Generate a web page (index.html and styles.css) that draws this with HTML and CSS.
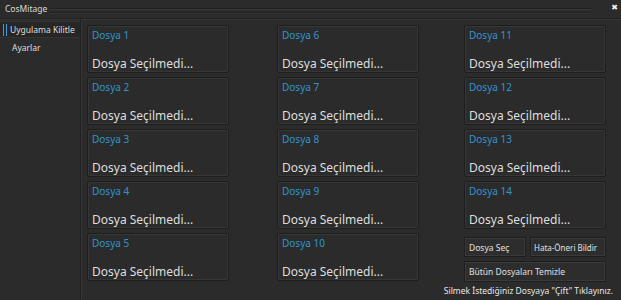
FILE: index.html
```html
<!DOCTYPE html>
<html lang="tr">
<head>
    <meta charset="UTF-8">
    <title>CosMitage</title>
    <link rel="stylesheet" href="styles.css">
</head>
<body>
    <div class="window">
        <div class="titlebar">
            <span class="title">CosMitage</span>
            <span class="title-line"></span>
            <span class="close">&#10006;</span>
        </div>
        <div class="main">
            <div class="sidebar">
                <div class="nav-item active"><span class="bars"></span>Uygulama Kilitle</div>
                <div class="nav-item">Ayarlar</div>
            </div>
            <div class="content">
                <div class="grid">
                    <div class="col">
                        <div class="slot"><div class="slot-title">Dosya 1</div><div class="slot-file">Dosya Seçilmedi...</div></div>
                        <div class="slot"><div class="slot-title">Dosya 2</div><div class="slot-file">Dosya Seçilmedi...</div></div>
                        <div class="slot"><div class="slot-title">Dosya 3</div><div class="slot-file">Dosya Seçilmedi...</div></div>
                        <div class="slot"><div class="slot-title">Dosya 4</div><div class="slot-file">Dosya Seçilmedi...</div></div>
                        <div class="slot"><div class="slot-title">Dosya 5</div><div class="slot-file">Dosya Seçilmedi...</div></div>
                    </div>
                    <div class="col">
                        <div class="slot"><div class="slot-title">Dosya 6</div><div class="slot-file">Dosya Seçilmedi...</div></div>
                        <div class="slot"><div class="slot-title">Dosya 7</div><div class="slot-file">Dosya Seçilmedi...</div></div>
                        <div class="slot"><div class="slot-title">Dosya 8</div><div class="slot-file">Dosya Seçilmedi...</div></div>
                        <div class="slot"><div class="slot-title">Dosya 9</div><div class="slot-file">Dosya Seçilmedi...</div></div>
                        <div class="slot"><div class="slot-title">Dosya 10</div><div class="slot-file">Dosya Seçilmedi...</div></div>
                    </div>
                    <div class="col">
                        <div class="slot"><div class="slot-title">Dosya 11</div><div class="slot-file">Dosya Seçilmedi...</div></div>
                        <div class="slot"><div class="slot-title">Dosya 12</div><div class="slot-file">Dosya Seçilmedi...</div></div>
                        <div class="slot"><div class="slot-title">Dosya 13</div><div class="slot-file">Dosya Seçilmedi...</div></div>
                        <div class="slot"><div class="slot-title">Dosya 14</div><div class="slot-file">Dosya Seçilmedi...</div></div>
                        <div class="actions">
                            <div class="btn-row">
                                <button class="btn btn-pick">Dosya Seç</button>
                                <button class="btn btn-report">Hata-Öneri Bildir</button>
                            </div>
                            <button class="btn btn-clear">Bütün Dosyaları Temizle</button>
                        </div>
                    </div>
                </div>
                <div class="hint">Silmek İstediğiniz Dosyaya "Çift" Tıklayınız.</div>
            </div>
        </div>
    </div>
</body>
</html>
```

FILE: styles.css
```css
body {
    margin: 0;
    background: #2b2b2b;
    font-family: "Noto Sans", "DejaVu Sans", sans-serif;
    color: #dcdcdc;
}

.window {
    width: 621px;
    height: 300px;
    display: flex;
    flex-direction: column;
    overflow: hidden;
}

.titlebar {
    flex-shrink: 0;
    height: 18px;
    display: flex;
    align-items: flex-start;
    padding: 0 4px 0 5px;
    border-bottom: 1px solid #222;
    box-shadow: 0 1px 0 #353535;
}

.title {
    font-size: 8.5px;
    line-height: 17px;
    color: #d8d8d8;
}

.title-line {
    flex: 1;
    height: 1px;
    margin: 8px 20px 0 3px;
    background: #1f1f1f;
    box-shadow: 0 1px 0 #3a3a3a, 0 4px 0 #232323, 0 5px 0 #343434;
}

.close {
    font-size: 8px;
    line-height: 14px;
    color: #f2f2f2;
    margin-right: -1px;
}

.main {
    flex: 1;
    display: flex;
}

.sidebar {
    width: 80px;
    flex-shrink: 0;
    padding-top: 2px;
    border-right: 1px solid #202020;
    box-shadow: 1px 0 0 #363636;
}

.nav-item {
    display: flex;
    align-items: center;
    height: 15px;
    padding-left: 12px;
    font-size: 8.5px;
    color: #dedede;
    white-space: nowrap;
}

.nav-item.active {
    padding-left: 3px;
    background: #262626;
    border-top: 1px solid #333;
    border-bottom: 1px solid #333;
}

.bars {
    width: 1px;
    height: 12px;
    margin-right: 6px;
    background: #3d9be0;
    box-shadow: 3px 0 0 #3d9be0;
}

.nav-item + .nav-item {
    margin-top: 2px;
}

.content {
    flex: 1;
    padding: 6px 0 0 6px;
    display: flex;
    flex-direction: column;
}

.grid {
    display: grid;
    grid-template-columns: 190px 187px 142px;
}

.col {
    display: flex;
    flex-direction: column;
    gap: 4px;
}

.slot {
    width: 142px;
    height: 48px;
    box-sizing: border-box;
    border: 1px solid #1e1e1e;
    box-shadow: inset 0 0 0 1px #363636;
    border-radius: 2px;
    display: flex;
    flex-direction: column;
    justify-content: space-between;
    padding: 0 0 0 4px;
}

.slot-title {
    font-size: 10px;
    line-height: 12px;
    color: #3193cf;
    margin-top: 3px;
}

.slot-file {
    font-size: 12px;
    line-height: 16px;
    color: #dedede;
}

.actions {
    display: flex;
    flex-direction: column;
    gap: 4px;
    padding-top: 4px;
}

.btn-row {
    display: flex;
    justify-content: space-between;
}

.btn {
    height: 20px;
    background: #2d2d2d;
    border: 1px solid #1e1e1e;
    box-shadow: inset 0 0 0 1px #3a3a3a;
    color: #e0e0e0;
    font-family: "Noto Sans", "DejaVu Sans", sans-serif;
    font-size: 8.5px;
    text-align: left;
    white-space: nowrap;
    padding: 0 4px;
}

.btn-pick {
    width: 62px;
}

.btn-report {
    width: 76px;
    font-size: 8px;
    padding: 0 3px;
}

.btn-clear {
    width: 142px;
    height: 21px;
}

.hint {
    align-self: flex-end;
    margin: 3px 8px 0 0;
    font-size: 8.5px;
    color: #e8e8e8;
}
```
